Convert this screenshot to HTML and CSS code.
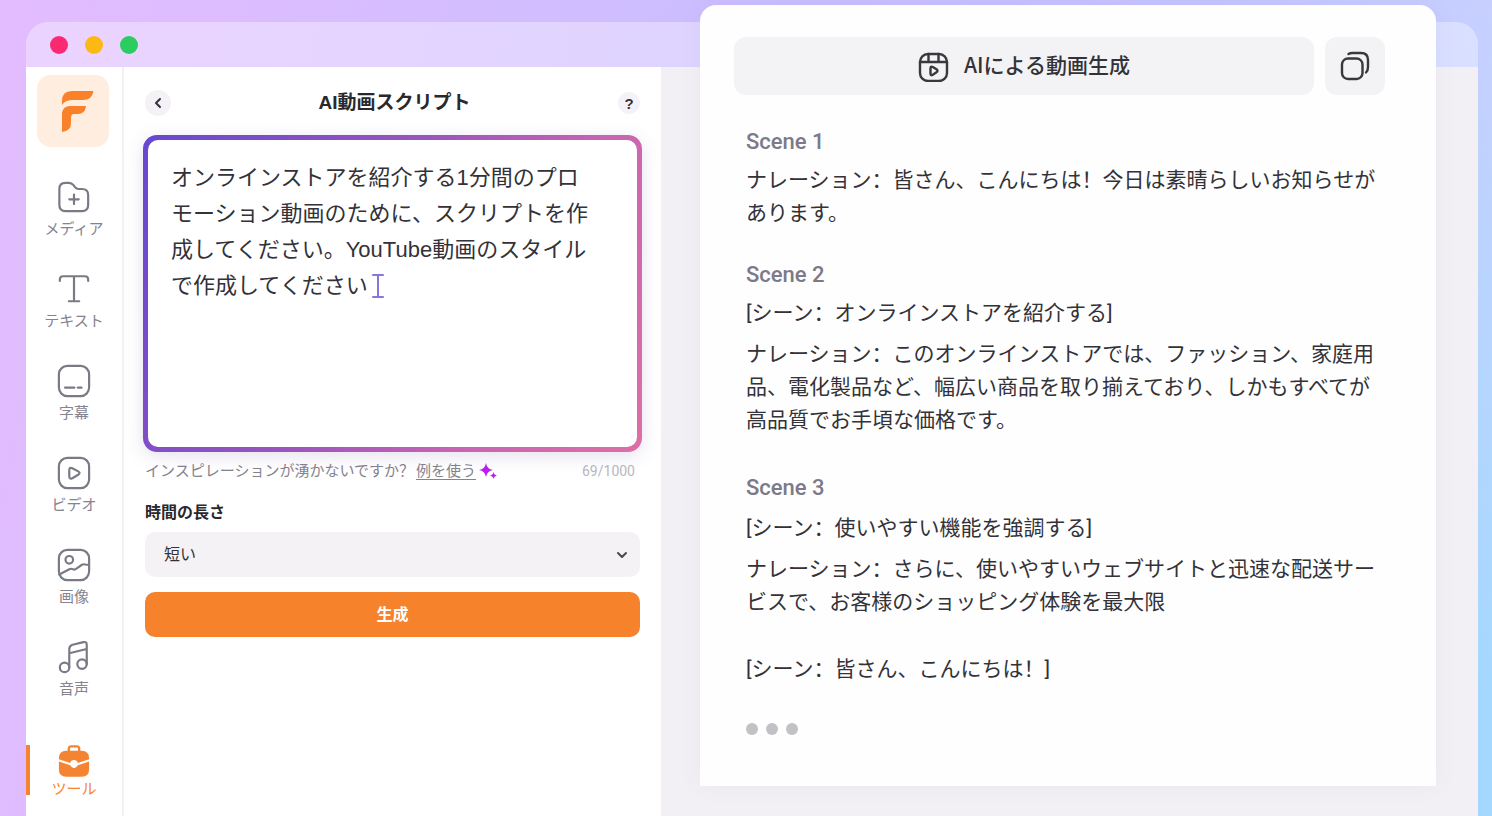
FILE: index.html
```html
<!DOCTYPE html>
<html lang="ja">
<head>
<meta charset="utf-8">
<meta name="viewport" content="width=device-width, initial-scale=1">
<title>AI動画スクリプト</title>
<link rel="stylesheet" href="styles.css">
</head>
<body>
<div class="window">
  <div class="titlebar">
    <span class="light light-close"></span>
    <span class="light light-min"></span>
    <span class="light light-max"></span>
  </div>
  <div class="workspace">
    <nav class="sidebar">
      <a class="logo" href="#" aria-label="Filmora">
        <svg class="logo-mark" width="72" height="72" viewBox="0 0 72 72">
          <path d="M25 30V26Q25 16 35 16H56.500Q55 25 46 25H36Q28 25 25 30Z"/>
          <path d="M25 57V38Q26 31 33 31H49Q48 39 41 39H37Q34 39 34 43V48Q34 56 25 57Z"/>
        </svg>
      </a>
      <ul class="nav-list">
        <li><a class="nav-item" href="#">
          <svg class="nav-icon" viewBox="0 0 36 36"><path d="M2.500 9.500Q2.500 3 9 3H12.500Q15.500 3 17.500 5.500L19 7.500Q20.500 9.500 23 9.500H26.500Q33 9.500 33 16V26.500Q33 33 26.500 33H9Q2.500 33 2.500 26.500Z"/><path d="M18 15.500V25.500M13 20.500H23"/></svg>
          <span>メディア</span></a></li>
        <li><a class="nav-item" href="#">
          <svg class="nav-icon" viewBox="0 0 36 36"><path d="M3 9.500V8Q3 4.500 6.500 4.500H29.500Q33 4.500 33 8V9.500M18 4.500V31M12.500 31H23.500"/></svg>
          <span>テキスト</span></a></li>
        <li><a class="nav-item" href="#">
          <svg class="nav-icon" viewBox="0 0 36 36"><rect x="2" y="2" width="32" height="32" rx="9"/><path d="M8.500 25H18.500M22 25H26"/></svg>
          <span>字幕</span></a></li>
        <li><a class="nav-item" href="#">
          <svg class="nav-icon" viewBox="0 0 36 36"><rect x="2" y="2" width="32" height="32" rx="9"/><path d="M13 15Q13 11.500 16.200 13L22.500 16.300Q25.300 18 22.500 19.800L16.200 23.500Q13 25 13 21.500Z"/></svg>
          <span>ビデオ</span></a></li>
        <li><a class="nav-item" href="#">
          <svg class="nav-icon" viewBox="0 0 36 36"><rect x="2" y="2" width="32" height="32" rx="9"/><circle cx="13" cy="12.500" r="4"/><path d="M2.500 28L13 22.500Q15 21.500 17 22.500Q19 23.500 21 21.500L26 18Q28 16.700 30 17.500L34 18"/></svg>
          <span>画像</span></a></li>
        <li><a class="nav-item" href="#">
          <svg class="nav-icon" viewBox="0 0 36 36"><circle cx="8" cy="29" r="5"/><circle cx="26.500" cy="25.500" r="5"/><path d="M13 29V9.500Q13 6 16.500 5L28 2.200Q31.500 1.500 31.500 5V25.500M13 14L31.500 9.500"/></svg>
          <span>音声</span></a></li>
      </ul>
      <a class="nav-item nav-item-active" href="#" aria-current="page">
        <svg class="nav-icon" viewBox="0 0 36 36"><path d="M12.500 6V4Q12.500 1.500 15 1.500H21Q23.500 1.500 23.500 4V6" stroke-width="2.500"/><path class="solid" d="M2 14Q2 6 10 6H26Q34 6 34 14V15L22 19Q21 16 18 16Q15 16 14 19L2 15Z"/><path class="solid" d="M2 17.500L14 21.500Q15.500 24.500 18 24.500Q20.500 24.500 22 21.500L34 17.500V26Q34 33.500 26 33.500H10Q2 33.500 2 26Z"/></svg>
        <span>ツール</span></a>
    </nav>

    <main class="panel">
      <header class="panel-head">
        <button class="round" type="button" aria-label="戻る"><svg width="8" height="12" viewBox="0 0 8 12"><path d="M6 2L2 6L6 10"/></svg></button>
        <h1 class="panel-title">AI動画スクリプト</h1>
        <button class="round round-help" type="button">?</button>
      </header>
      <div class="prompt">
        <textarea class="prompt-text" aria-label="スクリプトの内容" spellcheck="false">オンラインストアを紹介する1分間のプロ
モーション動画のために、スクリプトを作
成してください。YouTube動画のスタイル
で作成してください</textarea>
        <svg class="caret" width="12" height="26" viewBox="0 0 12 26"><path d="M1 2H11M6 2V24M1 24H11"/></svg>
      </div>
      <div class="hint">
        <span>インスピレーションが湧かないですか？</span>
        <a class="hint-link" href="#">例を使う</a>
        <svg class="sparkle" width="20" height="18" viewBox="0 0 20 18"><path d="M8 1Q9 7 15 8Q9 9 8 15Q7 9 1 8Q7 7 8 1Z"/><path d="M15.500 10Q16 13 19 13.500Q16 14 15.500 17Q15 14 12 13.500Q15 13 15.500 10Z"/></svg>
        <span class="counter">69/1000</span>
      </div>
      <label class="field-label" for="length">時間の長さ</label>
      <div class="select-wrap">
        <select class="select" id="length"><option>短い</option><option>長い</option></select>
        <svg class="chevron" width="12" height="8" viewBox="0 0 12 8"><path d="M2 2L6 6L10 2"/></svg>
      </div>
      <button class="generate" type="button">生成</button>
    </main>

    <section class="stage">
      <article class="card">
        <div class="card-actions">
          <button class="action" type="button">
            <svg width="32" height="32" viewBox="0 0 32 32"><rect x="2" y="4" width="27" height="27" rx="8"/><path d="M2 12H29M10.500 4V12M20.500 4V12"/><path d="M12.500 18.500Q12.500 16 14.800 17L18.500 19.300Q20.500 20.800 18.500 22.300L14.800 24.800Q12.500 26 12.500 23.500Z"/></svg>
            <span class="action-text">AIによる動画生成</span>
          </button>
          <button class="action action-copy" type="button" aria-label="コピー">
            <svg width="32" height="32" viewBox="0 0 32 32"><rect x="3" y="8.500" width="20.500" height="20.500" rx="6"/><path d="M9.500 4Q11 3 13.500 3H22Q29 3 29 10V17Q29 20.500 27 22.500"/></svg>
          </button>
        </div>
        <div class="script">
          <section class="scene">
            <h2>Scene 1</h2>
            <p>ナレーション：皆さん、こんにちは！今日は素晴らしいお知らせがあります。</p>
          </section>
          <section class="scene">
            <h2>Scene 2</h2>
            <p>[シーン：オンラインストアを紹介する]</p>
            <p>ナレーション：このオンラインストアでは、ファッション、家庭用品、電化製品など、幅広い商品を取り揃えており、しかもすべてが高品質でお手頃な価格です。</p>
          </section>
          <section class="scene scene-spaced">
            <h2>Scene 3</h2>
            <p>[シーン：使いやすい機能を強調する]</p>
            <p>ナレーション：さらに、使いやすいウェブサイトと迅速な配送サービスで、お客様のショッピング体験を最大限</p>
          </section>
          <section class="scene scene-spaced">
            <p>[シーン：皆さん、こんにちは！]</p>
          </section>
          <div class="dots"><span></span><span></span><span></span></div>
        </div>
      </article>
    </section>
  </div>
</div>
</body>
</html>
```
FILE: styles.css
```css
* { box-sizing: border-box; }

body {
  margin: 0;
  min-height: 100vh;
  display: flex;
  padding: 22px 14px 0 26px;
  background:
    linear-gradient(180deg, rgba(160, 216, 255, 0) 0%, rgba(160, 216, 255, 0.9) 85%) right / 50% 100% no-repeat,
    linear-gradient(100deg, #e3bcff 0%, #dabdff 18%, #c8bdff 50%, #c4c4ff 75%, #cad6ff 100%);
  font-family: "Liberation Sans", "Noto Sans CJK SC", sans-serif;
  font-feature-settings: "locl" 0;
  color: #333238;
}

h1, h2, p, ul { margin: 0; padding: 0; }
button, select, textarea { font-family: inherit; color: inherit; border: 0; }
a { color: inherit; text-decoration: none; }
svg { display: block; fill: none; stroke-linecap: round; stroke-linejoin: round; }

.window {
  flex: 1;
  display: flex;
  flex-direction: column;
}

.titlebar {
  height: 45px;
  display: flex;
  align-items: center;
  gap: 17px;
  padding-left: 24px;
  border-radius: 22px 22px 0 0;
  background: rgba(255, 255, 255, 0.35);
}

.light { width: 18px; height: 18px; border-radius: 50%; }
.light-close { background: #fb2872; }
.light-min { background: #fcb913; }
.light-max { background: #2bcd60; }

.workspace {
  flex: 1;
  display: grid;
  grid-template-columns: 98px minmax(0, 537fr) minmax(0, 817fr);
  background: #f2f0f4;
}

/* Sidebar */
.sidebar {
  display: flex;
  flex-direction: column;
  padding: 8px 0 16px;
  border-right: 2px solid #f2f0f5;
  background: #fff;
}

.logo {
  width: 72px;
  height: 72px;
  margin-left: 11px;
  border-radius: 14px;
  background: #ffeddf;
}
.logo-mark { fill: #f98129; }

.nav-list {
  list-style: none;
  display: flex;
  flex-direction: column;
  gap: 32px;
  margin: 33px 0 45px;
}

.nav-item {
  display: flex;
  flex-direction: column;
  align-items: center;
  gap: 4px;
  font-size: 15px;
  line-height: 22px;
  color: #85838f;
}

.nav-icon {
  width: 34px;
  height: 34px;
  stroke: #7b7985;
  stroke-width: 2.300;
}

.nav-item-active {
  gap: 0;
  line-height: 20px;
  color: #f58432;
  background: linear-gradient(#f58432, #f58432) left top / 4px 50px no-repeat;
}
.nav-item-active .nav-icon { stroke: #f58432; }
.nav-item-active .nav-icon .solid { fill: #f58432; stroke: none; }

/* Prompt panel */
.panel {
  padding: 23px 21px 24px;
  background: #fff;
}

.panel-head {
  display: flex;
  align-items: center;
  justify-content: space-between;
  margin-bottom: 19px;
}

.panel-title {
  font-size: 19px;
  line-height: 26px;
  font-weight: 700;
  color: #29282d;
}

.round {
  width: 26px;
  height: 26px;
  padding: 0;
  display: flex;
  align-items: center;
  justify-content: center;
  border-radius: 50%;
  background: #f4f2f6;
}
.round svg { stroke: #333238; stroke-width: 2; }
.round-help {
  width: 22px;
  height: 22px;
  font-size: 15px;
  font-weight: 700;
}

.prompt {
  position: relative;
  margin: 0 -2px;
  padding: 5px;
  border-radius: 14px;
  background: linear-gradient(115deg, #6548d0 0%, #9a55bd 45%, #c663b4 70%, #dd6fa5 100%);
  box-shadow: 0 4px 18px rgba(110, 90, 160, 0.18);
}

.prompt-text {
  display: block;
  width: 100%;
  height: 307px;
  padding: 20px 16px 20px 23px;
  border-radius: 10px;
  background: #fff;
  font-size: 22px;
  font-feature-settings: inherit;
  line-height: 36px;
  resize: none;
  outline: 0;
}

.caret {
  position: absolute;
  left: 229px;
  top: 138px;
  stroke: #8a74dd;
  stroke-width: 2;
}

.hint {
  display: flex;
  align-items: center;
  gap: 2px;
  padding: 8px 5px 0 0;
  font-size: 15px;
  line-height: 22px;
  color: #85838f;
}
.hint-link { text-decoration: underline; text-underline-offset: 3px; }
.sparkle { fill: #b91ff0; }
.counter {
  margin-left: auto;
  font-family: Roboto, sans-serif;
  font-size: 14px;
  color: #b9b8c1;
}

.field-label {
  display: block;
  margin: 19px 0 7px;
  font-size: 16px;
  line-height: 24px;
  font-weight: 700;
  color: #29282d;
}

.select-wrap { position: relative; }
.select {
  display: block;
  width: 100%;
  height: 45px;
  padding: 0 19px;
  appearance: none;
  border-radius: 10px;
  background: #f4f2f5;
  font-size: 16px;
}
.chevron {
  position: absolute;
  right: 12px;
  top: 19px;
  stroke: #4a4950;
  stroke-width: 2;
  pointer-events: none;
}

.generate {
  display: block;
  width: 100%;
  height: 45px;
  margin-top: 15px;
  padding: 0 0 4px;
  border-radius: 10px;
  background: #f6822c;
  color: #fff;
  font-size: 16px;
  font-weight: 700;
}

/* Result card, raised over the title bar */
.stage { padding: 0 42px 30px 39px; }

.card {
  position: relative;
  margin-top: -62px;
  padding: 32px 51px 51px 34px;
  border-radius: 16px 16px 0 0;
  background: #fefefe;
  box-shadow: 0 0 24px rgba(120, 110, 140, 0.06);
}

.card-actions { display: flex; gap: 11px; }

.action {
  flex: 1;
  height: 58px;
  padding: 0;
  display: flex;
  align-items: center;
  justify-content: center;
  gap: 14px;
  border-radius: 12px;
  background: #f3f2f5;
  font-family: "Noto Sans CJK SC", sans-serif;
  font-size: 21px;
  font-weight: 500;
}
.action svg { stroke: #39383d; stroke-width: 2.400; }
.action-text { padding-bottom: 4px; }
.action-copy { flex: 0 0 60px; }

.script {
  padding: 30px 0 0 12px;
  font-family: Roboto, "Noto Sans CJK SC", sans-serif;
  font-size: 21px;
  line-height: 33px;
}

.scene { margin-bottom: 28px; }
.scene + .scene-spaced { margin-top: 34px; }
.scene h2 {
  margin-bottom: 6px;
  font-size: 22px;
  font-weight: 500;
  color: #7c7a88;
}
.scene-spaced h2 { margin-bottom: 8px; }
.scene p + p { margin-top: 8px; }

.dots {
  display: flex;
  gap: 8px;
  margin-top: 37px;
}
.dots span {
  width: 12px;
  height: 12px;
  border-radius: 50%;
  background: #c2c1c6;
}
```
